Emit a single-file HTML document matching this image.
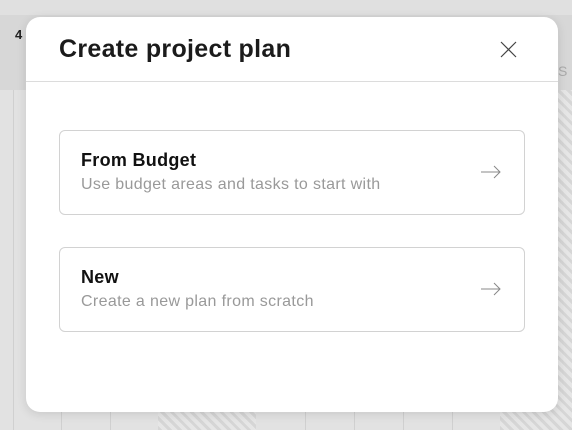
<!DOCTYPE html>
<html><head><style>
body{margin:0;width:572px;height:430px;overflow:hidden;background:#e2e2e2;font-family:"Liberation Sans",sans-serif;position:relative}
.top{position:absolute;left:0;top:0;width:572px;height:15px;background:#e0e0e0}
.band{position:absolute;left:0;top:15px;width:572px;height:75px;background:#d7d7d7}
.vl{position:absolute;top:90px;bottom:0;width:1px;background:#d0d0d0}
.hatch{position:absolute;bottom:0;height:20px;background:repeating-linear-gradient(45deg,#d6d6d6 0 3px,#e6e6e6 3px 7px)}
.modal{position:absolute;left:26px;top:17px;width:532px;height:395px;background:#fff;border-radius:14px;box-shadow:0 2px 10px rgba(0,0,0,.12)}
.hd{height:64px;border-bottom:1px solid #dcdcdc;position:relative}
.hd h1{margin:0;position:absolute;left:33px;top:18px;font-size:25px;font-weight:bold;color:#1b1b1b;letter-spacing:0.3px}
.card{position:absolute;left:33px;width:464px;height:83px;border:1px solid #d2d2d2;border-radius:6px}
.t{position:absolute;left:21px;top:19px;font-size:18px;font-weight:bold;color:#111;letter-spacing:0.3px}
.s{position:absolute;left:21px;top:45px;font-size:16px;color:#999;letter-spacing:0.35px}
.ar{position:absolute;right:22px;top:34px}
</style></head><body>
<div class="top"></div><div class="band"></div>
<div style="position:absolute;left:15px;top:27px;font-size:13px;font-weight:bold;color:#222">4</div>
<div style="position:absolute;left:558px;top:63px;font-size:14px;color:#aaa">S</div>
<div class="vl" style="left:13px"></div>
<div class="vl" style="left:61px"></div><div class="vl" style="left:110px"></div><div class="vl" style="left:305px"></div><div class="vl" style="left:354px"></div><div class="vl" style="left:403px"></div><div class="vl" style="left:452px"></div>
<div class="hatch" style="left:158px;width:98px"></div>
<div class="hatch" style="left:500px;width:72px;top:90px;height:auto"></div>
<div class="modal">
<div class="hd"><h1>Create project plan</h1>
<svg style="position:absolute;left:474px;top:24px" width="17" height="17" viewBox="0 0 17 17"><path d="M1 1L16 16M16 1L1 16" stroke="#444" stroke-width="1.2" fill="none"/></svg></div>
<div class="card" style="top:113px"><div class="t">From Budget</div><div class="s">Use budget areas and tasks to start with</div>
<svg class="ar" width="22" height="14" viewBox="0 0 22 14"><path d="M1 7H20M14 1L20 7L14 13" stroke="#888" stroke-width="1" fill="none"/></svg></div>
<div class="card" style="top:230px"><div class="t">New</div><div class="s">Create a new plan from scratch</div>
<svg class="ar" width="22" height="14" viewBox="0 0 22 14"><path d="M1 7H20M14 1L20 7L14 13" stroke="#888" stroke-width="1" fill="none"/></svg></div>
</div>
</body></html>
